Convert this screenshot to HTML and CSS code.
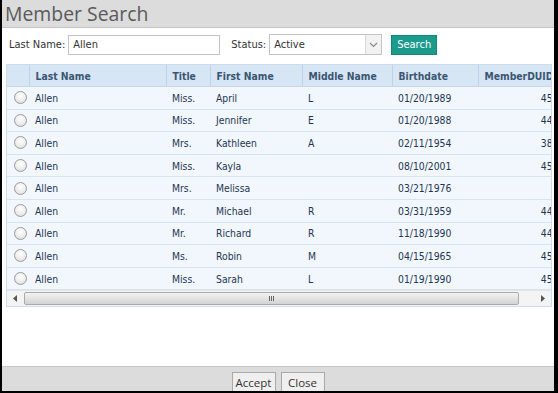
FILE: index.html
```html
<!DOCTYPE html>
<html>
<head>
<meta charset="utf-8">
<link rel="stylesheet" href="styles.css">
</head>
<body>
<div class="dialog">
  <div class="titlebar"><h1 class="title">Member Search</h1></div>
  <div class="content">
    <div class="searchrow">
      <label class="lbl">Last Name:</label>
      <div class="textbox">Allen</div>
      <label class="lbl status-lbl">Status:</label>
      <div class="select"><span class="select-text">Active</span><span class="select-arrow"><svg width="9" height="6" viewBox="0 0 9 6"><path d="M1 1 L4.5 4.5 L8 1" fill="none" stroke="#8a8a8a" stroke-width="1.2"/></svg></span></div>
      <button class="btn-search">Search</button>
    </div>
    <div class="grid">
      <div class="viewport">
        <table class="tbl">
          <colgroup>
            <col class="c-sel"><col class="c-last"><col class="c-title"><col class="c-first"><col class="c-mid"><col class="c-birth"><col class="c-duid">
          </colgroup>
          <thead>
            <tr><th></th><th>Last Name</th><th>Title</th><th>First Name</th><th>Middle Name</th><th>Birthdate</th><th>MemberDUID</th></tr>
          </thead>
          <tbody>
            <tr><td><span class="radio"></span></td><td>Allen</td><td>Miss.</td><td>April</td><td>L</td><td>01/20/1989</td><td class="num">4501287</td></tr>
            <tr><td><span class="radio"></span></td><td>Allen</td><td>Miss.</td><td>Jennifer</td><td>E</td><td>01/20/1988</td><td class="num">4490312</td></tr>
            <tr><td><span class="radio"></span></td><td>Allen</td><td>Mrs.</td><td>Kathleen</td><td>A</td><td>02/11/1954</td><td class="num">3860421</td></tr>
            <tr><td><span class="radio"></span></td><td>Allen</td><td>Miss.</td><td>Kayla</td><td></td><td>08/10/2001</td><td class="num">4507765</td></tr>
            <tr><td><span class="radio"></span></td><td>Allen</td><td>Mrs.</td><td>Melissa</td><td></td><td>03/21/1976</td><td class="num">45012</td></tr>
            <tr><td><span class="radio"></span></td><td>Allen</td><td>Mr.</td><td>Michael</td><td>R</td><td>03/31/1959</td><td class="num">4493390</td></tr>
            <tr><td><span class="radio"></span></td><td>Allen</td><td>Mr.</td><td>Richard</td><td>R</td><td>11/18/1990</td><td class="num">4491876</td></tr>
            <tr><td><span class="radio"></span></td><td>Allen</td><td>Ms.</td><td>Robin</td><td>M</td><td>04/15/1965</td><td class="num">4502214</td></tr>
            <tr><td><span class="radio"></span></td><td>Allen</td><td>Miss.</td><td>Sarah</td><td>L</td><td>01/19/1990</td><td class="num">4505531</td></tr>
          </tbody>
        </table>
      </div>
      <div class="hscroll">
        <span class="sb-arrow"><svg width="4" height="7" viewBox="0 0 4 7"><path d="M4 0 L0 3.5 L4 7 Z" fill="#555"/></svg></span>
        <div class="sb-track">
          <div class="sb-thumb"><span class="grip"></span><span class="grip"></span><span class="grip"></span></div>
        </div>
        <span class="sb-arrow"><svg width="4" height="7" viewBox="0 0 4 7"><path d="M0 0 L4 3.5 L0 7 Z" fill="#555"/></svg></span>
      </div>
    </div>
  </div>
  <div class="footer">
    <button class="btn">Accept</button>
    <button class="btn">Close</button>
  </div>
</div>
</body>
</html>
```
FILE: styles.css
```css
html, body {
  margin: 0;
  padding: 0;
  background: #000;
}
.dialog {
  width: 552px;
  height: 391px;
  margin-left: 2px;
  background: #fff;
  display: flex;
  flex-direction: column;
  font-family: "DejaVu Sans Condensed", "DejaVu Sans", sans-serif;
  font-size: 11px;
  overflow: hidden;
}
.titlebar {
  height: 27px;
  background: #dcdcdc;
  border-bottom: 1px solid #c4c4c4;
  padding-left: 3px;
  flex: none;
}
.title {
  margin: 0;
  font-family: "Open Sans", sans-serif;
  font-weight: 400;
  font-size: 19.4px;
  line-height: 28px;
  color: #5a5a5a;
}
.content {
  flex: 1;
  padding: 6px 0 0 4px;
}
.searchrow {
  display: flex;
  align-items: center;
  height: 21px;
  padding-left: 3px;
  color: #333;
}
.lbl {
  margin-right: 3px;
}
.status-lbl {
  margin-left: 11px;
}
.textbox {
  width: 146px;
  height: 18px;
  border: 1px solid #c3c3c3;
  padding-left: 4px;
  line-height: 18px;
  color: #333;
}
.select {
  width: 111px;
  height: 19px;
  border: 1px solid #c3c3c3;
  display: flex;
  align-items: stretch;
}
.select-text {
  flex: 1;
  padding-left: 4px;
  line-height: 19px;
}
.select-arrow {
  width: 15px;
  border-left: 1px solid #d8d8d8;
  background: #f2f2f2;
  display: flex;
  align-items: center;
  justify-content: center;
}
.btn-search {
  margin-left: 9px;
  width: 46px;
  height: 20px;
  border: 1px solid #13857a;
  background: #1a9b8c;
  color: #fff;
  font-family: "DejaVu Sans Condensed", "DejaVu Sans", sans-serif;
  font-size: 11px;
  padding: 0;
}
.grid {
  margin-top: 9px;
  width: 544px;
  border: 1px solid #cddceb;
  background: #f3f8fd;
  font-size: 10.3px;
}
.viewport {
  width: 544px;
  overflow: hidden;
}
.tbl {
  border-collapse: collapse;
  table-layout: fixed;
  width: 581px;
}
.c-sel { width: 22px; }
.c-last { width: 137px; }
.c-title { width: 44px; }
.c-first { width: 92px; }
.c-mid { width: 90px; }
.c-birth { width: 86px; }
.c-duid { width: 110px; }
.tbl th {
  height: 21px;
  padding: 0 0 0 6px;
  background: #d6e6f4;
  border-left: 1px solid #bfd3e6;
  border-bottom: 1px solid #c6d8ea;
  color: #3b5673;
  font-weight: bold;
  text-align: left;
  white-space: nowrap;
  overflow: hidden;
}
.tbl th:first-child {
  border-left: none;
}
.tbl td {
  height: 21.6px;
  padding: 0 0 0 6px;
  border-bottom: 1px solid #d6e4f1;
  color: #1f3650;
  white-space: nowrap;
  overflow: hidden;
  background: #f1f7fd;
}
.tbl td:first-child {
  padding: 0 0 0 7px;
}
.tbl td.num {
  text-align: right;
  padding: 0 6px 0 0;
}
.radio {
  display: block;
  width: 11px;
  height: 11px;
  border-radius: 50%;
  border: 1px solid #9c9c9c;
  background: radial-gradient(circle at 50% 35%, #ffffff 0%, #f0f0f0 45%, #d9d9d9 100%);
}
.hscroll {
  height: 15px;
  border-top: 1px solid #e4e4e4;
  display: flex;
  align-items: center;
  background: #f4f4f4;
}
.sb-arrow {
  width: 16px;
  display: flex;
  align-items: center;
  justify-content: center;
  flex: none;
}
.sb-track {
  flex: 1;
  height: 13px;
  display: flex;
  align-items: center;
}
.sb-thumb {
  width: 493px;
  height: 11px;
  margin-left: 1px;
  border: 1px solid #a9a9a9;
  border-radius: 2px;
  background: linear-gradient(#f3f3f3, #e3e3e3 50%, #d3d3d3);
  display: flex;
  justify-content: center;
  align-items: center;
  gap: 1px;
}
.grip {
  width: 1px;
  height: 5px;
  background: #666;
}
.footer {
  flex: none;
  height: 24px;
  background: #dcdcdc;
  border-top: 1px solid #c6c6c6;
  display: flex;
  justify-content: center;
  align-items: flex-start;
  gap: 5px;
  overflow: hidden;
}
.btn {
  margin-top: 5px;
  width: 44px;
  height: 22px;
  padding: 0 0 2px 0;
  border: 1px solid #a9a9a9;
  background: #efefef;
  color: #333;
  font-family: "Open Sans", sans-serif;
  font-size: 11.5px;
}
```
